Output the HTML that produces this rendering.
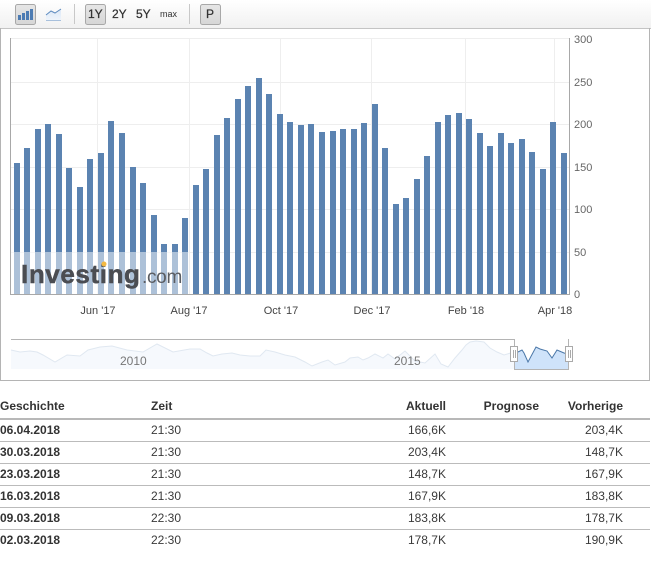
<!DOCTYPE html>
<html><head><meta charset="utf-8"><style>
html,body{margin:0;padding:0;width:651px;height:565px;overflow:hidden;background:#fff}
body{position:relative;font-family:"Liberation Sans",Arial,sans-serif;color:#3a3a3a}
.t{position:absolute;font-size:12px;line-height:14px;white-space:nowrap}
.b{font-weight:bold;color:#333}
.r{text-align:right}
.hl{position:absolute;left:0;width:650px;height:1px;background:#bbb}
svg{position:absolute;left:0;top:0}
</style></head><body>
<svg width="651" height="382" viewBox="0 0 651 382">
<defs><linearGradient id="tb" x1="0" y1="0" x2="0" y2="1"><stop offset="0" stop-color="#fff"/><stop offset="1" stop-color="#f1f1f1"/></linearGradient>
<linearGradient id="btn" x1="0" y1="0" x2="0" y2="1"><stop offset="0" stop-color="#e6e6e6"/><stop offset="1" stop-color="#d6d6d6"/></linearGradient>
<linearGradient id="ln" x1="0" y1="0" x2="0" y2="1"><stop offset="0" stop-color="#dbe7f6"/><stop offset="1" stop-color="#eef4fb"/></linearGradient></defs>
<rect x="0" y="0" width="651" height="28" fill="url(#tb)"/>
<rect x="0" y="28" width="651" height="1" fill="#c4c4c4"/>
<rect x="0" y="28" width="1" height="353" fill="#b4b4b4"/>
<rect x="649" y="28" width="1" height="353" fill="#b4b4b4"/>
<rect x="0" y="380" width="650" height="1" fill="#b4b4b4"/>
<!-- toolbar -->
<rect x="15.500" y="4.500" width="20" height="20" rx="2" fill="url(#btn)" stroke="#a8a8a8"/>
<g fill="#4d7cb3"><rect x="18" y="15" width="3" height="5"/><rect x="22" y="13" width="3" height="7"/><rect x="26" y="11" width="3" height="9"/><rect x="30" y="9" width="3" height="11"/></g>
<path d="M46 15 L51 11 L55 13 L61 9 L61 20 L46 20 Z" fill="url(#ln)"/>
<path d="M46 15 L51 11 L55 13 L61 9" fill="none" stroke="#5f8cc0" stroke-width="1"/>
<path d="M46 20.500 H61" stroke="#a8c0dc"/>
<rect x="74" y="4" width="1" height="20" fill="#c8c8c8"/>
<rect x="85.500" y="4.500" width="20" height="20" rx="2" fill="url(#btn)" stroke="#a8a8a8"/>
<rect x="189" y="4" width="1" height="20" fill="#c8c8c8"/>
<rect x="200.500" y="4.500" width="20" height="20" rx="2" fill="url(#btn)" stroke="#a8a8a8"/>
<g font-family="Liberation Sans,Arial,sans-serif" fill="#333" stroke="#333" stroke-width="0.25">
<text x="88" y="18" font-size="12">1Y</text>
<text x="112" y="18" font-size="12">2Y</text>
<text x="136" y="18" font-size="12">5Y</text>
<text x="160" y="17" font-size="9" stroke="none">max</text>
<text x="206" y="18" font-size="12">P</text>
</g>
<!-- grid -->
<g stroke="#eeeeee" stroke-width="1" fill="none">
<path d="M11 38.500H569M11 82.500H569M11 124.500H569M11 167.500H569M11 209.500H569M11 252.500H569"/>
<path d="M97.500 38V294M189.500 38V294M280.500 38V294M371.500 38V294M465.500 38V294M554.500 38V294"/>
</g>
<!-- bars -->
<g fill="#5b83b1">
<rect x="14" y="163" width="6" height="131"/><rect x="24" y="148" width="6" height="146"/><rect x="35" y="129" width="6" height="165"/><rect x="45" y="124" width="6" height="170"/><rect x="56" y="134" width="6" height="160"/><rect x="66" y="168" width="6" height="126"/><rect x="77" y="187" width="6" height="107"/><rect x="87" y="159" width="6" height="135"/><rect x="98" y="153" width="6" height="141"/><rect x="108" y="121" width="6" height="173"/><rect x="119" y="133" width="6" height="161"/><rect x="130" y="167" width="6" height="127"/><rect x="140" y="183" width="6" height="111"/><rect x="151" y="215" width="6" height="79"/><rect x="161" y="244" width="6" height="50"/><rect x="172" y="244" width="6" height="50"/><rect x="182" y="218" width="6" height="76"/><rect x="193" y="185" width="6" height="109"/>
<rect x="203" y="169" width="6" height="125"/><rect x="214" y="135" width="6" height="159"/><rect x="224" y="118" width="6" height="176"/><rect x="235" y="99" width="6" height="195"/><rect x="245" y="86" width="6" height="208"/><rect x="256" y="78" width="6" height="216"/><rect x="266" y="94" width="6" height="200"/><rect x="277" y="114" width="6" height="180"/><rect x="287" y="122" width="6" height="172"/><rect x="298" y="125" width="6" height="169"/><rect x="308" y="124" width="6" height="170"/><rect x="319" y="132" width="6" height="162"/><rect x="330" y="131" width="6" height="163"/><rect x="340" y="129" width="6" height="165"/><rect x="351" y="129" width="6" height="165"/><rect x="361" y="123" width="6" height="171"/><rect x="372" y="104" width="6" height="190"/><rect x="382" y="148" width="6" height="146"/><rect x="393" y="204" width="6" height="90"/>
<rect x="403" y="198" width="6" height="96"/><rect x="414" y="179" width="6" height="115"/><rect x="424" y="156" width="6" height="138"/><rect x="435" y="122" width="6" height="172"/><rect x="445" y="115" width="6" height="179"/><rect x="456" y="113" width="6" height="181"/><rect x="466" y="119" width="6" height="175"/><rect x="477" y="133" width="6" height="161"/><rect x="487" y="146" width="6" height="148"/><rect x="498" y="133" width="6" height="161"/><rect x="508" y="143" width="6" height="151"/><rect x="519" y="139" width="6" height="155"/><rect x="529" y="152" width="6" height="142"/><rect x="540" y="169" width="6" height="125"/><rect x="550" y="122" width="6" height="172"/><rect x="561" y="153" width="6" height="141"/>
</g>
<!-- watermark -->
<rect x="11" y="252" width="178" height="42" fill="#fff" fill-opacity="0.5"/>
<text x="21" y="283" font-family="Liberation Sans,Arial,sans-serif" font-weight="bold" font-size="26" letter-spacing="0.600" stroke="#4b4d52" stroke-width="0.5" fill="#4b4d52">Investing</text>
<text x="142" y="283" font-family="Liberation Sans,Arial,sans-serif" font-size="19" letter-spacing="-0.300" fill="#5a5c61">.com</text>
<circle cx="104" cy="264" r="2.500" fill="#f4b942"/>
<!-- axes -->
<rect x="10" y="38" width="1" height="257" fill="#a8a8a8"/>
<rect x="569" y="38" width="1" height="257" fill="#a8a8a8"/>
<rect x="10" y="294" width="560" height="1" fill="#a8a8a8"/>
<g font-family="Liberation Sans,Arial,sans-serif" font-size="11" fill="#666">
<text x="574" y="43">300</text><text x="574" y="86">250</text><text x="574" y="128">200</text><text x="574" y="171">150</text><text x="574" y="213">100</text><text x="574" y="256">50</text><text x="574" y="298">0</text>
<g fill="#444" text-anchor="middle"><text x="98" y="314">Jun '17</text><text x="189" y="314">Aug '17</text><text x="281" y="314">Oct '17</text><text x="372" y="314">Dec '17</text><text x="466" y="314">Feb '18</text><text x="555" y="314">Apr '18</text></g>
</g>
<!-- navigator -->
<path d="M11 350L20 352L30 351L37 352L43 355L55 362L67 355L80 356L88 350L100 347L112 346L127 350L143 352L157 344L173 352L190 349L200 349L207 353L213 356L222 354L232 353L240 355L250 356L260 356L266 350L275 352L285 355L295 357L305 362L312 366L322 362L328 360L335 365L345 362L350 358L358 357L363 360L368 358L375 354L383 358L388 354L395 359L400 355L405 351L415 361L425 363L435 354L441 364L448 367L455 358L462 350L466 345L470 342L476 341L484 342L490 348L497 352L504 355L514 352L514 369L11 369Z" fill="#f6f9fd"/>
<path d="M11 350L20 352L30 351L37 352L43 355L55 362L67 355L80 356L88 350L100 347L112 346L127 350L143 352L157 344L173 352L190 349L200 349L207 353L213 356L222 354L232 353L240 355L250 356L260 356L266 350L275 352L285 355L295 357L305 362L312 366L322 362L328 360L335 365L345 362L350 358L358 357L363 360L368 358L375 354L383 358L388 354L395 359L400 355L405 351L415 361L425 363L435 354L441 364L448 367L455 358L462 350L466 345L470 342L476 341L484 342L490 348L497 352L504 355L514 352" fill="none" stroke="#e0e8f1"/>
<path d="M514 352L518 352L522 350L524 353L528 362L536 347L540 349L547 351L552 358L557 350L564 353L568 354L568 369L514 369Z" fill="#cfe3fa"/>
<path d="M514 352L518 352L522 350L524 353L528 362L536 347L540 349L547 351L552 358L557 350L564 353L568 354" fill="none" stroke="#4a77a8" stroke-width="1"/>
<path d="M11 339.500H514.500V369.500H568.500V339" fill="none" stroke="#b4b4b4"/>
<g font-family="Liberation Sans,Arial,sans-serif" font-size="12" fill="#777"><text x="120" y="365">2010</text><text x="394" y="365">2015</text></g>
<g fill="#fff" stroke="#aaa"><rect x="510.500" y="346.500" width="7" height="15"/><rect x="565.500" y="346.500" width="7" height="15"/></g>
<path d="M513.500 350V358M515.500 350V358M568.500 350V358M570.500 350V358" stroke="#aaa" fill="none"/>
</svg>
<!-- table -->
<div class="t b" style="left:0;top:399px">Geschichte</div>
<div class="t b" style="left:151px;top:399px">Zeit</div>
<div class="t b r" style="right:205px;top:399px">Aktuell</div>
<div class="t b r" style="right:112px;top:399px">Prognose</div>
<div class="t b r" style="right:28px;top:399px">Vorherige</div>
<div class="hl" style="top:418px;height:2px;background:#b8b8b8"></div>

<div class="t b" style="left:0;top:423px">06.04.2018</div><div class="t" style="left:151px;top:423px">21:30</div><div class="t r" style="right:205px;top:423px">166,6K</div><div class="t r" style="right:28px;top:423px">203,4K</div>
<div class="hl" style="top:441px"></div>
<div class="t b" style="left:0;top:445px">30.03.2018</div><div class="t" style="left:151px;top:445px">21:30</div><div class="t r" style="right:205px;top:445px">203,4K</div><div class="t r" style="right:28px;top:445px">148,7K</div>
<div class="hl" style="top:463px"></div>
<div class="t b" style="left:0;top:467px">23.03.2018</div><div class="t" style="left:151px;top:467px">21:30</div><div class="t r" style="right:205px;top:467px">148,7K</div><div class="t r" style="right:28px;top:467px">167,9K</div>
<div class="hl" style="top:485px"></div>
<div class="t b" style="left:0;top:489px">16.03.2018</div><div class="t" style="left:151px;top:489px">21:30</div><div class="t r" style="right:205px;top:489px">167,9K</div><div class="t r" style="right:28px;top:489px">183,8K</div>
<div class="hl" style="top:507px"></div>
<div class="t b" style="left:0;top:511px">09.03.2018</div><div class="t" style="left:151px;top:511px">22:30</div><div class="t r" style="right:205px;top:511px">183,8K</div><div class="t r" style="right:28px;top:511px">178,7K</div>
<div class="hl" style="top:529px"></div>
<div class="t b" style="left:0;top:533px">02.03.2018</div><div class="t" style="left:151px;top:533px">22:30</div><div class="t r" style="right:205px;top:533px">178,7K</div><div class="t r" style="right:28px;top:533px">190,9K</div>
</body></html>
